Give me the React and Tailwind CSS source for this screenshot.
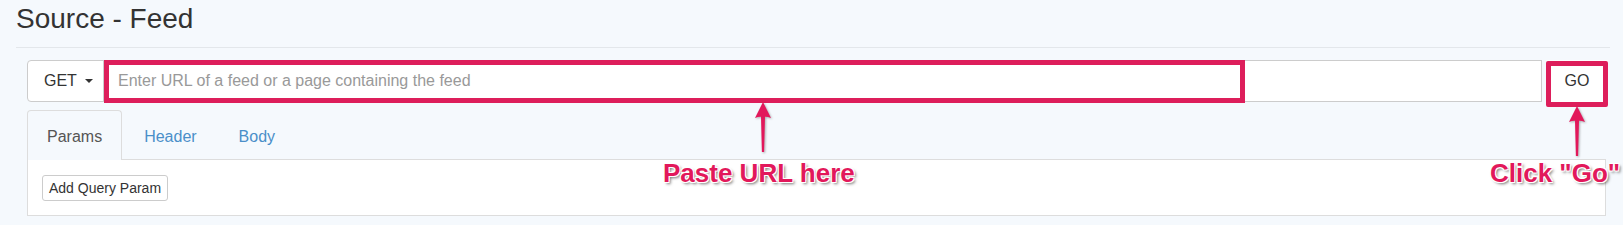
import React from 'react';

function Arrow({ className }) {
  return (
    <svg className={className} width="20" height="52" viewBox="0 0 20 52">
      <path
        d="M10 0 L18 16 Q14 14.5 12 14.8 L11.1 50 L8.9 50 L8 14.8 Q6 14.5 2 16 Z"
        fill="#e2185b"
      />
    </svg>
  );
}

export default function App() {
  const callout =
    "absolute font-bold text-[26px] leading-[26px] text-[#e2185b] whitespace-nowrap [text-shadow:1px_1px_0_#fff,-1px_-1px_0_#fff,1px_-1px_0_#fff,-1px_1px_0_#fff,2px_2px_3px_rgba(0,0,0,0.55)]";

  return (
    <div className="relative min-h-[225px] bg-[#f5f9fd] pl-[16px] pr-[13px] font-['Liberation_Sans',Arial,sans-serif] text-[#333]">
      <h1 className="pt-[2px] text-[28px] leading-[34px] font-normal">Source - Feed</h1>
      <hr className="mt-[11px] border-0 border-t border-[#e3e7eb]" />

      <div className="pl-[11px] pr-[2px] pt-[12px]">
        {/* URL row */}
        <div className="flex h-[42px]">
          <button className="flex w-[77px] shrink-0 items-center rounded-l-[4px] border border-[#ccc] bg-white pl-[16px] text-[16px]">
            GET
            <span className="ml-[8px] h-0 w-0 border-x-[4px] border-t-[4px] border-x-transparent border-t-[#333]" />
          </button>
          <div className="relative -ml-px flex-1">
            <input
              type="text"
              placeholder="Enter URL of a feed or a page containing the feed"
              className="h-full w-full border border-[#ccc] bg-white pl-[14px] text-[16px] text-[#555] placeholder:text-[#999] outline-none"
            />
            <div className="pointer-events-none absolute left-[1px] top-0 h-[43px] w-[1141px] border-[5px] border-[#dd1e5b]" />
          </div>
          <div className="relative ml-[4px] w-[62px] shrink-0">
            <button className="h-full w-full bg-white text-[16px] text-[#333]">GO</button>
            <div className="pointer-events-none absolute left-0 top-[1px] h-[46px] w-[62px] rounded-[2px] border-[5px] border-[#dd1e5b]" />
          </div>
        </div>

        {/* Tabs */}
        <div className="mt-[8px] flex text-[16px]">
          <div className="relative z-10 -mb-px mr-[2px] h-[50px] rounded-t-[4px] border border-b-0 border-[#ddd] bg-[#f5f9fd] px-[19px] pt-[16px] leading-[20px] text-[#555]">
            Params
          </div>
          <div className="mr-[2px] h-[49px] px-[20px] pt-[17px] leading-[20px] text-[#4a8fc9]">Header</div>
          <div className="h-[49px] px-[20px] pt-[17px] leading-[20px] text-[#4a8fc9]">Body</div>
        </div>
        <div className="mr-[2px] border border-[#ddd] bg-white px-[14px] pb-[14px] pt-[15px]">
          <button className="h-[26px] rounded-[3px] border border-[#ccc] bg-white px-[6px] text-[14px] leading-[24px] text-[#333]">
            Add Query Param
          </button>
        </div>
      </div>

      {/* annotations */}
      <Arrow className="absolute left-[753px] top-[102px] [filter:drop-shadow(1px_1px_1px_rgba(0,0,0,0.3))]" />
      <div className={`${callout} left-[663px] top-[160px]`}>Paste URL here</div>
      <Arrow className="absolute left-[1567px] top-[106px] [filter:drop-shadow(1px_1px_1px_rgba(0,0,0,0.3))]" />
      <div className={`${callout} left-[1490px] top-[160px]`}>Click "Go"</div>
    </div>
  );
}
